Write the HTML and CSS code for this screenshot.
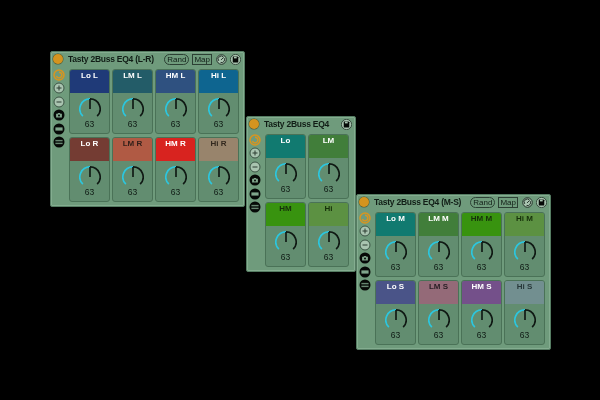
FILE: index.html
```html
<!DOCTYPE html>
<html lang="en">
<head>
    <meta charset="UTF-8">
    <title>Tasty 2Buss EQ4</title>
    <link rel="stylesheet" href="styles.css">
</head>
<body>

    <svg class="defs" width="0" height="0">
        <symbol id="knob" viewBox="0 0 24 24">
            <path d="M4.2 19.8A11 11 0 0 1 12 1" fill="none" stroke="#2cc6de" stroke-width="1.8"/>
            <path d="M12 1A11 11 0 0 1 19.8 19.8" fill="none" stroke="#0f1813" stroke-width="1.8"/>
            <path d="M12 1V12" fill="none" stroke="#0f1813" stroke-width="1.8"/>
        </symbol>
        <symbol id="power" viewBox="0 0 12 12">
            <circle cx="6" cy="6" r="5" fill="none" stroke="#d9951f" stroke-width="1.5"/>
            <path d="M6 3.2A2.8 2.8 0 1 1 3.4 7" fill="none" stroke="#d9951f" stroke-width="1.4"/>
        </symbol>
        <symbol id="plus" viewBox="0 0 12 12">
            <circle cx="6" cy="6" r="5" fill="#a9c4b0" stroke="#3c5445"/>
            <path d="M3.5 6h5M6 3.5v5" stroke="#2c3d33"/>
        </symbol>
        <symbol id="minus" viewBox="0 0 12 12">
            <circle cx="6" cy="6" r="5" fill="#a9c4b0" stroke="#3c5445"/>
            <path d="M3.5 6h5" stroke="#2c3d33"/>
        </symbol>
        <symbol id="camera" viewBox="0 0 12 12">
            <circle cx="6" cy="6" r="5.5" fill="#060907"/>
            <path d="M3.1 4.8h1.4l.6-.9h1.8l.6.9h1.4V8.4H3.1z" fill="#7fa58b"/>
            <circle cx="6" cy="6.5" r="1" fill="#060907"/>
        </symbol>
        <symbol id="box" viewBox="0 0 12 12">
            <circle cx="6" cy="6" r="5.5" fill="#060907"/>
            <rect x="2.4" y="4.4" width="7.2" height="3.2" fill="#7fa58b"/>
        </symbol>
        <symbol id="list" viewBox="0 0 12 12">
            <circle cx="6" cy="6" r="5.5" fill="#060907"/>
            <path d="M2.4 4.4h7.2M2.4 7.6h7.2" fill="none" stroke="#7fa58b" stroke-width=".9"/>
            <path d="M2.4 6h7.2" fill="none" stroke="#5d8069" stroke-width=".7"/>
        </symbol>
        <symbol id="dial" viewBox="0 0 12 12">
            <circle cx="6" cy="6" r="5.2" fill="#a9c4b0" stroke="#1c2a22"/>
            <path d="M3 7.5A3.3 3.3 0 0 1 8.4 3.6M9 4.5A3.3 3.3 0 0 1 5 9.2M5.5 6.5L8 4" fill="none" stroke="#1c2a22"/>
        </symbol>
        <symbol id="save" viewBox="0 0 12 12">
            <circle cx="6" cy="6" r="5.6" fill="#a9c4b0" stroke="#1c2a22" stroke-width=".8"/>
            <path d="M3 2.8h5.2L9 3.6V9.2H3z" fill="#060907"/>
            <rect x="4.3" y="3" width="3" height="1.8" fill="#a9c4b0"/>
        </symbol>
    </svg>

    <!-- L-R -->
    <div class="device device-lr">
        <div class="device-head">
            <span class="dot"></span>
            <span class="title">Tasty 2Buss EQ4 (L-R)</span>
            <span class="head-btns">
                <span class="btn-rand">Rand</span>
                <span class="btn-map">Map</span>
                <svg class="head-icon"><use href="#dial"/></svg>
                <svg class="head-icon"><use href="#save"/></svg>
            </span>
        </div>
        <div class="device-body">
            <div class="side">
                <svg class="side-icon"><use href="#power"/></svg>
                <svg class="side-icon"><use href="#plus"/></svg>
                <svg class="side-icon"><use href="#minus"/></svg>
                <svg class="side-icon"><use href="#camera"/></svg>
                <svg class="side-icon"><use href="#box"/></svg>
                <svg class="side-icon"><use href="#list"/></svg>
            </div>
            <div class="grid grid-4">
                <div class="cell"><div class="cell-label lo-l">Lo L</div><svg class="knob"><use href="#knob"/></svg><div class="value">63</div></div>
                <div class="cell"><div class="cell-label lm-l">LM L</div><svg class="knob"><use href="#knob"/></svg><div class="value">63</div></div>
                <div class="cell"><div class="cell-label hm-l">HM L</div><svg class="knob"><use href="#knob"/></svg><div class="value">63</div></div>
                <div class="cell"><div class="cell-label hi-l">Hi L</div><svg class="knob"><use href="#knob"/></svg><div class="value">63</div></div>
                <div class="cell"><div class="cell-label lo-r">Lo R</div><svg class="knob"><use href="#knob"/></svg><div class="value">63</div></div>
                <div class="cell"><div class="cell-label lm-r">LM R</div><svg class="knob"><use href="#knob"/></svg><div class="value">63</div></div>
                <div class="cell"><div class="cell-label hm-r">HM R</div><svg class="knob"><use href="#knob"/></svg><div class="value">63</div></div>
                <div class="cell"><div class="cell-label hi-r">Hi R</div><svg class="knob"><use href="#knob"/></svg><div class="value">63</div></div>
            </div>
        </div>
    </div>

    <!-- stereo -->
    <div class="device device-st">
        <div class="device-head">
            <span class="dot"></span>
            <span class="title">Tasty 2Buss EQ4</span>
            <span class="head-btns">
                <svg class="head-icon"><use href="#save"/></svg>
            </span>
        </div>
        <div class="device-body">
            <div class="side">
                <svg class="side-icon"><use href="#power"/></svg>
                <svg class="side-icon"><use href="#plus"/></svg>
                <svg class="side-icon"><use href="#minus"/></svg>
                <svg class="side-icon"><use href="#camera"/></svg>
                <svg class="side-icon"><use href="#box"/></svg>
                <svg class="side-icon"><use href="#list"/></svg>
            </div>
            <div class="grid grid-2">
                <div class="cell"><div class="cell-label lo-m">Lo</div><svg class="knob"><use href="#knob"/></svg><div class="value">63</div></div>
                <div class="cell"><div class="cell-label lm-m">LM</div><svg class="knob"><use href="#knob"/></svg><div class="value">63</div></div>
                <div class="cell"><div class="cell-label hm-m">HM</div><svg class="knob"><use href="#knob"/></svg><div class="value">63</div></div>
                <div class="cell"><div class="cell-label hi-m">Hi</div><svg class="knob"><use href="#knob"/></svg><div class="value">63</div></div>
            </div>
        </div>
    </div>

    <!-- M-S -->
    <div class="device device-ms">
        <div class="device-head">
            <span class="dot"></span>
            <span class="title">Tasty 2Buss EQ4 (M-S)</span>
            <span class="head-btns">
                <span class="btn-rand">Rand</span>
                <span class="btn-map">Map</span>
                <svg class="head-icon"><use href="#dial"/></svg>
                <svg class="head-icon"><use href="#save"/></svg>
            </span>
        </div>
        <div class="device-body">
            <div class="side">
                <svg class="side-icon"><use href="#power"/></svg>
                <svg class="side-icon"><use href="#plus"/></svg>
                <svg class="side-icon"><use href="#minus"/></svg>
                <svg class="side-icon"><use href="#camera"/></svg>
                <svg class="side-icon"><use href="#box"/></svg>
                <svg class="side-icon"><use href="#list"/></svg>
            </div>
            <div class="grid grid-4">
                <div class="cell"><div class="cell-label lo-m">Lo M</div><svg class="knob"><use href="#knob"/></svg><div class="value">63</div></div>
                <div class="cell"><div class="cell-label lm-m">LM M</div><svg class="knob"><use href="#knob"/></svg><div class="value">63</div></div>
                <div class="cell"><div class="cell-label hm-m">HM M</div><svg class="knob"><use href="#knob"/></svg><div class="value">63</div></div>
                <div class="cell"><div class="cell-label hi-m">Hi M</div><svg class="knob"><use href="#knob"/></svg><div class="value">63</div></div>
                <div class="cell"><div class="cell-label lo-s">Lo S</div><svg class="knob"><use href="#knob"/></svg><div class="value">63</div></div>
                <div class="cell"><div class="cell-label lm-s">LM S</div><svg class="knob"><use href="#knob"/></svg><div class="value">63</div></div>
                <div class="cell"><div class="cell-label hm-s">HM S</div><svg class="knob"><use href="#knob"/></svg><div class="value">63</div></div>
                <div class="cell"><div class="cell-label hi-s">Hi S</div><svg class="knob"><use href="#knob"/></svg><div class="value">63</div></div>
            </div>
        </div>
    </div>

</body>
</html>
```

FILE: styles.css
```css
body {
    margin: 0;
    width: 600px;
    height: 400px;
    overflow: hidden;
    background-color: #000;
    font-family: "Liberation Sans", Arial, sans-serif;
}
.defs {
    position: absolute;
}

/* windows */
.device {
    position: absolute;
    box-sizing: border-box;
    height: 156px;
    padding: 0 3px 0 2px;
    background: #6f9b7c;
    border: 1px solid #557c62;
    border-radius: 2px;
    box-shadow: inset 0 0 0 1px #84ad90;
    filter: blur(0.2px);
}
.device-lr {
    left: 50px;
    top: 51px;
    width: 195px;
}
.device-st {
    left: 246px;
    top: 116px;
    width: 110px;
}
.device-ms {
    left: 356px;
    top: 194px;
    width: 195px;
}

/* header */
.device-head {
    display: flex;
    align-items: center;
    height: 14px;
}
.dot {
    width: 10px;
    height: 10px;
    margin-right: 5px;
    border-radius: 50%;
    background: #d4941f;
    box-shadow: 0 0 0 0.5px #4a5a3c;
}
.title {
    font-size: 8.5px;
    font-weight: bold;
    color: #111d16;
    white-space: nowrap;
    letter-spacing: -0.25px;
}
.head-btns {
    display: flex;
    align-items: center;
    margin-left: auto;
}
.btn-rand, .btn-map {
    font-size: 8px;
    line-height: 9px;
    color: #111d16;
    border: 1px solid #2c4034;
}
.btn-rand {
    padding: 0 2px;
    border-radius: 6px;
    margin-right: 3px;
}
.btn-map {
    padding: 0 1px;
    margin-right: 4px;
}
.head-icon {
    width: 11px;
    height: 11px;
}
.head-icon + .head-icon {
    margin-left: 3px;
}

/* body */
.device-body {
    display: flex;
    padding-top: 3px;
}
.side {
    display: flex;
    flex-direction: column;
    gap: 1.4px;
    width: 16px;
    flex: none;
}
.side-icon {
    width: 12px;
    height: 12px;
}
.grid {
    display: grid;
    grid-template-rows: 65px 65px;
    gap: 3px 2px;
}
.grid-4 {
    grid-template-columns: repeat(4, 41px);
}
.grid-2 {
    grid-template-columns: repeat(2, 41px);
}

/* cells */
.cell {
    display: flex;
    flex-direction: column;
    align-items: center;
    box-sizing: border-box;
    background: #628d70;
    border: 1px solid #4a7257;
    border-radius: 3px;
    overflow: hidden;
}
.cell-label {
    align-self: stretch;
    height: 23px;
    padding-top: 1px;
    box-sizing: border-box;
    font-size: 8px;
    font-weight: bold;
    line-height: 10px;
    text-align: center;
    color: #fff;
}
.knob {
    width: 22px;
    height: 22px;
    margin-top: 5px;
}
.value {
    font-size: 8.5px;
    line-height: 9px;
    color: #0f1a14;
}

/* band colours */
.lo-l { background: #1f3a78; }
.lm-l { background: #235c68; }
.hm-l { background: #2f5180; }
.hi-l { background: #0e6590; }
.lo-r { background: #743c33; }
.lm-r { background: #b05a44; color: #33201a; }
.hm-r { background: #d8231f; }
.hi-r { background: #98846c; color: #33291f; }
.lo-m { background: #117a70; }
.lm-m { background: #417e3a; }
.hm-m { background: #38930f; color: #16300a; }
.hi-m { background: #5c9142; color: #16300a; }
.lo-s { background: #4a5488; }
.lm-s { background: #946a78; color: #2b2026; }
.hm-s { background: #74508a; }
.hi-s { background: #728f90; color: #28383a; }
```
